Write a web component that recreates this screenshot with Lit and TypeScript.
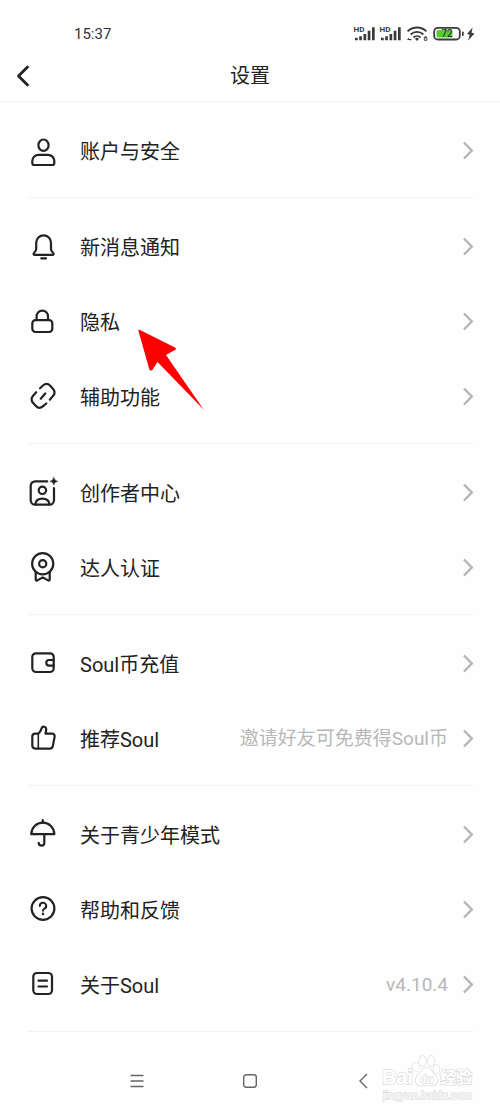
import { LitElement, html, svg, css, nothing } from "lit";
import type { SVGTemplateResult } from "lit";
import { customElement, property } from "lit/decorators.js";

interface Item {
  icon: string;
  label: string;
  value?: string;
}

const GROUPS: Item[][] = [
  [{ icon: "user", label: "账户与安全" }],
  [
    { icon: "bell", label: "新消息通知" },
    { icon: "lock", label: "隐私" },
    { icon: "link", label: "辅助功能" },
  ],
  [
    { icon: "creator", label: "创作者中心" },
    { icon: "medal", label: "达人认证" },
  ],
  [
    { icon: "wallet", label: "Soul币充值" },
    { icon: "thumb", label: "推荐Soul", value: "邀请好友可免费得Soul币" },
  ],
  [
    { icon: "umbrella", label: "关于青少年模式" },
    { icon: "help", label: "帮助和反馈" },
    { icon: "about", label: "关于Soul", value: "v4.10.4" },
  ],
];

const ICONS: Record<string, SVGTemplateResult> = {
  user: svg`<ellipse cx="16.5" cy="11.2" rx="5.1" ry="5.7"/>
    <path d="M12 20.8h9a6.3 6.3 0 0 1 6.3 6.3v1.9a2 2 0 0 1-2 2H7.3a2 2 0 0 1-2-2v-1.9a6.3 6.3 0 0 1 6.7-6.3z"/>`,
  bell: svg`<path d="M16.6 5.4a7.4 7.4 0 0 0-7.4 7.4v6.2c0 1.6-.7 2.6-2 3.7-1.100 1-.7 2.200.6 2.200h17.600c1.300 0 1.700-1.200.6-2.200-1.300-1.100-2-2.100-2-3.700v-6.200a7.400 7.400 0 0 0-7.400-7.400z"/>
    <path d="M14.200 28.300h4.800"/>`,
  lock: svg`<rect x="5.300" y="15.200" width="20" height="11.800" rx="3.200"/>
    <path d="M9.600 15v-3.700a5.700 5.700 0 0 1 11.400 0V15"/>`,
  link: svg`<path d="M13 8.200l3-2.700c2.500-2.200 5-2.200 7.200.2l2.700 3c2.300 2.500 2.300 4.800.1 7.200l-3.200 3.800"/>
    <path d="M9.200 12.200l-3.100 3.500c-2.200 2.600-2.200 4.800.1 7.300l2.700 3c2.200 2.400 4.700 2.400 7.200.2l3.200-2.700"/>
    <path d="M13.700 18.700l4.600-5.200"/>`,
  creator: svg`<path d="M20.200 5.300H8.200a4.500 4.500 0 0 0-4.500 4.500v14.400a4.500 4.500 0 0 0 4.500 4.500h14.300a4.500 4.500 0 0 0 4.500-4.500V12"/>
    <circle cx="15.400" cy="14.300" r="3.700"/>
    <path d="M8.300 28.300c.3-3.500 3-5.700 7.100-5.700s6.800 2.200 7.100 5.700"/>
    <path fill="#222" stroke="#222" stroke-width=".4" d="M26.800 1.300q.6 3.400 4 4-3.400.6-4 4-.6-3.400-4-4 3.400-.6 4-4z"/>`,
  medal: svg`<circle cx="15.700" cy="12.700" r="10.600"/><circle cx="15.700" cy="12.700" r="3.600"/>
    <path d="M8.700 21v7.600c0 1 .9 1.300 1.600.8l5.400-3 5.400 3c.7.500 1.600.2 1.600-.8V21"/>`,
  wallet: svg`<rect x="5.300" y="6.300" width="21.400" height="18.700" rx="3.700"/>
    <path d="M26.700 13h-4.600a2.800 2.800 0 0 0 0 5.600h4.600"/>`,
  thumb: svg`<path d="M11.300 11.600H8.300a3 3 0 0 0-3 3v9a3 3 0 0 0 3 3h14.500a3.200 3.200 0 0 0 3.100-2.700l1.700-9.100a2.600 2.600 0 0 0-2.600-3.200h-6.600c.5-1.400.8-2.700.8-4.200 0-3.100-3.800-3.500-4.500-1.300-.6 2-1.200 3.800-3.400 5.500z"/>
    <path d="M11.300 11.600v15" stroke-width="1.600"/>`,
  umbrella: svg`<path d="M4.300 16.200a11.500 11.500 0 0 1 23 0z"/><path d="M15.800 2v2.500"/>
    <path d="M17.300 16.500v8.300a2.800 2.800 0 0 1-5.600 0"/>`,
  help: svg`<circle cx="16" cy="15.500" r="11.400"/>
    <path d="M12.800 13a3.200 3.200 0 1 1 4.700 2.700c-1 .6-1.500 1-1.500 2.100" stroke-width="2"/>
    <path d="M16 20.800v.2" stroke-width="2.400"/>`,
  about: svg`<rect x="6.300" y="5" width="18.700" height="21" rx="3.700"/>
    <path d="M11.500 12.700h8.500M11.500 18.500h8.500"/>`,
};

@customElement("settings-row")
export class SettingsRow extends LitElement {
  @property({ attribute: false }) item!: Item;

  static styles = css`
    :host {
      display: block;
    }
    .row {
      display: flex;
      align-items: center;
      height: 75px;
      color: #222;
      text-decoration: none;
    }
    .icon {
      width: 33px;
      height: 33px;
      margin-right: 20px;
      fill: none;
      stroke: #222;
      stroke-width: 2.2;
      stroke-linecap: round;
      stroke-linejoin: round;
    }
    .label {
      flex: 1;
      padding-top: 2px;
      font-size: 20px;
      line-height: 30px;
      white-space: nowrap;
    }
    .value {
      margin-right: 15px;
      font-size: 19px;
      line-height: 30px;
      color: #b8b8b8;
      white-space: nowrap;
    }
    .chevron {
      width: 11px;
      height: 19px;
      fill: none;
      stroke: #b5b5b5;
      stroke-width: 2.4;
    }
  `;

  render() {
    const { icon, label, value } = this.item;
    return html`<a class="row" href="#">
      <svg class="icon" viewBox="0 0 33 33" aria-hidden="true">${ICONS[icon]}</svg>
      <span class="label">${label}</span>
      ${value ? html`<span class="value">${value}</span>` : nothing}
      <svg class="chevron" viewBox="0 0 11 19" aria-hidden="true"><path d="M1 1.500l7.800 8-7.800 8" /></svg>
    </a>`;
  }
}

const bars = (x: number) => svg`<g transform="translate(${x} 0)">
  <text class="hd" x="1.500" y="7.800">HD</text>
  <path d="M3 13.700h2.700v2.600H3zM7.200 12.300h2.700v4H7.200zM11.500 10h2.700v6.300h-2.700zM15.700 6.700h2.700v9.600h-2.700zM20 3.300h2.700v13H20z"/>
</g>`;

@customElement("status-bar")
export class StatusBar extends LitElement {
  static styles = css`
    :host {
      display: flex;
      align-items: center;
      justify-content: space-between;
      padding: 24px 24px 0 74px;
    }
    .time {
      font-size: 15px;
      line-height: 20px;
      color: #333;
    }
    .signals {
      width: 124px;
      height: 20px;
      fill: #3a3a3a;
    }
    .hd {
      font-size: 8px;
      font-weight: 700;
    }
    .tiny {
      font-size: 7px;
      font-weight: 700;
    }
    .charge {
      font-size: 10px;
      font-weight: 400;
      fill: #222;
    }
    .line {
      fill: none;
      stroke: #3a3a3a;
      stroke-width: 1.8;
    }
  `;

  render() {
    return html`<span class="time">15:37</span>
      <svg class="signals" viewBox="0 0 124 20" role="img" aria-label="信号与电量">
        ${bars(0)} ${bars(26)}
        <path class="line" d="M55.600 7.300a13.500 13.500 0 0 1 18.800 0M58.700 10.500a9 9 0 0 1 12.600 0M61.500 13.500a5 5 0 0 1 7 0" />
        <path d="M65 17l-2-2.300a3 3 0 0 1 4 0zM55 16l2-2.500v1.500h3l-2 2v-1z" />
        <text class="tiny" x="71.500" y="17.300">6</text>
        <rect class="line" x="82.200" y="3.900" width="25.600" height="11.600" rx="3.600" />
        <rect x="110" y="7.500" width="1.700" height="4.500" rx=".8" />
        <rect x="84.500" y="6" width="16" height="7.500" rx="1.500" fill="#5c3" />
        <text class="charge" x="89.500" y="13.400">72</text>
        <path d="M120.600 3.500l-5.600 6.500 2.700.7-1.500 5.800 6.300-7-3-.7z" />
      </svg>`;
  }
}

@customElement("app-root")
export class AppRoot extends LitElement {
  static styles = css`
    :host {
      display: block;
      position: relative;
      min-height: 100vh;
      background: #fefefe;
      color: #222;
      font-family: Roboto, "Noto Sans CJK SC", sans-serif;
      font-weight: 400;
    }
    .header {
      display: grid;
      grid-template-columns: 60px 1fr 60px;
      align-items: center;
      height: 50px;
      padding-top: 7px;
      border-bottom: 1px solid #f3f3f3;
    }
    button {
      display: grid;
      place-items: center;
      padding: 0;
      border: 0;
      background: none;
    }
    .back {
      width: 45px;
      height: 40px;
    }
    .back svg {
      width: 14px;
      height: 22px;
      fill: none;
      stroke: #222;
      stroke-width: 2.8;
      stroke-linecap: round;
      stroke-linejoin: round;
    }
    h1 {
      margin: 0;
      font-size: 20px;
      line-height: 30px;
      font-weight: 400;
      text-align: center;
    }
    .group {
      margin: 0 26px 0 27px;
      padding: 11px 0 9px;
      border-bottom: 1px solid #f3f3f3;
    }
    .system {
      position: relative;
      display: grid;
      grid-template-columns: repeat(3, 1fr);
      padding: 34px 80px 15px;
    }
    .system button {
      height: 30px;
    }
    .system svg {
      width: 16px;
      height: 16px;
      fill: none;
      stroke: #666;
      stroke-width: 1.4;
    }
    .pointer {
      position: absolute;
      left: 136px;
      top: 328px;
      width: 70px;
      height: 84px;
      fill: #f00;
      pointer-events: none;
    }
    .system .watermark {
      position: absolute;
      right: 26px;
      bottom: 8px;
      width: 96px;
      height: 50px;
      fill: #fff;
      stroke: #ddd;
      stroke-width: 1.4;
      paint-order: stroke;
      pointer-events: none;
    }
    .brand {
      font: 700 20px "Liberation Sans", sans-serif;
    }
    .brand-du {
      font: 700 11px "Liberation Sans", sans-serif;
    }
    .brand-cn {
      font: 700 16px "Noto Sans CJK SC", sans-serif;
    }
    .site {
      font: 400 11px "Liberation Sans", sans-serif;
    }
  `;

  render() {
    return html`
      <status-bar></status-bar>
      <header class="header">
        <button class="back" aria-label="返回">
          <svg viewBox="0 0 14 22"><path d="M11.500 2L2.500 11l9 9" /></svg>
        </button>
        <h1>设置</h1>
      </header>
      <main>
        ${GROUPS.map(
          (group) => html`<section class="group">
            ${group.map((item) => html`<settings-row .item=${item}></settings-row>`)}
          </section>`
        )}
      </main>
      <footer class="system">
        <button aria-label="菜单"><svg viewBox="0 0 16 16"><path d="M1.500 2.500h13M1.500 8h13M1.500 13.500h13" /></svg></button>
        <button aria-label="主页"><svg viewBox="0 0 16 16"><rect x="1.700" y="1.700" width="12.600" height="12.600" rx="2.500" /></svg></button>
        <button aria-label="后退"><svg viewBox="0 0 16 16"><path d="M12 1L5 8l7 7" /></svg></button>
        <svg class="watermark" viewBox="0 0 96 50" aria-hidden="true">
          <ellipse cx="38" cy="14" rx="3" ry="4.500" />
          <ellipse cx="44.500" cy="8" rx="3.300" ry="5" />
          <ellipse cx="53" cy="8" rx="3.300" ry="5" />
          <ellipse cx="58.500" cy="16" rx="3" ry="4.500" />
          <path d="M48.500 14.500c4 0 5 4.500 8 7 4.500 4 3.500 11-2.500 11-3.500 0-7.500-.5-11 0-6 0-7-7-2.500-11 3-2.500 4-7 8-7z" />
          <text class="brand" x="4" y="31">Bai</text>
          <text class="brand-du" x="42" y="30">du</text>
          <text class="brand-cn" x="62" y="30">经验</text>
          <text class="site" x="5" y="46">jingyan.baidu.com</text>
        </svg>
      </footer>
      <svg class="pointer" viewBox="136 328 70 84" aria-hidden="true">
        <path d="M138.500 331q-.7-2 1.500-1l35 17.500q2 1.500-.5 2.800l-8.500 4.700 38 55-46.500-48-5.200 8q-2 1.500-3-.7z" />
      </svg>
    `;
  }
}
